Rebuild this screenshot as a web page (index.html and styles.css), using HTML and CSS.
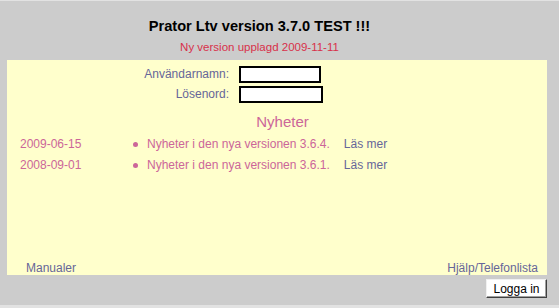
FILE: index.html
```html
<!DOCTYPE html>
<html lang="sv">
<head>
  <meta charset="UTF-8">
  <title>Prator Ltv</title>
  <link rel="stylesheet" href="styles.css">
</head>
<body>
  <div class="page">
    <!-- rubrik -->
    <div class="header">
      <div class="title">Prator Ltv version 3.7.0 TEST !!!</div>
      <div class="subtitle">Ny version upplagd 2009-11-11</div>
    </div>

    <!-- gula panelen -->
    <div class="panel">
      <div class="login">
        <label class="login-label" for="user">Användarnamn:</label>
        <input class="login-input" id="user" type="text">
        <label class="login-label" for="pass">Lösenord:</label>
        <input class="login-input wide" id="pass" type="password">
      </div>

      <div class="news-title">Nyheter</div>
      <div class="news">
        <div class="news-row">
          <span class="news-date">2009-06-15</span>
          <span class="news-bullet"></span>
          <span class="news-text">Nyheter i den nya versionen 3.6.4.</span>
          <a class="news-more">Läs mer</a>
        </div>
        <div class="news-row">
          <span class="news-date">2008-09-01</span>
          <span class="news-bullet"></span>
          <span class="news-text">Nyheter i den nya versionen 3.6.1.</span>
          <a class="news-more">Läs mer</a>
        </div>
      </div>

      <div class="footer">
        <a class="footer-link">Manualer</a>
        <a class="footer-link">Hjälp/Telefonlista</a>
      </div>
    </div>

    <div class="actions">
      <button class="login-btn">Logga in</button>
    </div>
  </div>
</body>
</html>
```

FILE: styles.css
```css
html {
  background: #e2e2e2;
}
body {
  margin: 0;
  font-family: "Liberation Sans", Arial, sans-serif;
  font-size: 12px;
}

/* grå bakgrund */
.page {
  margin-top: 1px;
  height: 304px;
  background: #cccccc;
}

.header {
  height: 59px;
  padding-right: 40px;
  text-align: center;
}
.title {
  padding-top: 15px;
  font-size: 14.6px;
  font-weight: bold;
  line-height: 20px;
  color: #000;
}
.subtitle {
  margin-top: 4px;
  font-size: 11.5px;
  line-height: 15px;
  color: #d8304a;
}

/* gul ruta */
.panel {
  margin-left: 7px;
  width: 540px;
  height: 215px;
  background: #ffffcc;
  display: flex;
  flex-direction: column;
  box-sizing: border-box;
  padding-top: 6px;
}

.login {
  display: grid;
  grid-template-columns: 222px auto;
  column-gap: 10px;
  row-gap: 3px;
  align-items: center;
}
.login-label {
  text-align: right;
  color: #666699;
  line-height: 17px;
}
.login-input {
  width: 82px;
  height: 17px;
  box-sizing: border-box;
  border: 2px solid #000;
  background: #fff;
  margin: 0;
  padding: 0;
}
.login-input.wide {
  width: 84px;
}

.news-title {
  margin-top: 10px;
  padding-left: 11px;
  text-align: center;
  font-size: 15px;
  line-height: 18px;
  color: #cc6699;
}

.news {
  margin-top: 3px;
  padding-left: 13px;
}
.news-row {
  display: flex;
  align-items: center;
  line-height: 21px;
}
.news-date {
  width: 113px;
  color: #cc6699;
}
.news-bullet {
  width: 5px;
  height: 5px;
  border-radius: 50%;
  background: #cc6699;
  margin-right: 9px;
}
.news-text {
  color: #cc6699;
  margin-right: 14px;
}
.news-more {
  color: #666699;
}

.footer {
  margin-top: auto;
  display: flex;
  justify-content: space-between;
  padding: 0 9px 0 19px;
  line-height: 14px;
}
.footer-link {
  color: #666699;
}

.actions {
  width: 547px;
  display: flex;
  justify-content: flex-end;
  padding-top: 4px;
}
.login-btn {
  width: 61px;
  height: 19px;
  padding: 0;
  font-family: "Liberation Sans", Arial, sans-serif;
  font-size: 12px;
  color: #000;
  background: #fff;
  border: 1px solid;
  border-color: #f0f0f0 #404040 #404040 #f0f0f0;
  box-shadow: inset -1px -1px 0 #a0a0a0;
}
```
